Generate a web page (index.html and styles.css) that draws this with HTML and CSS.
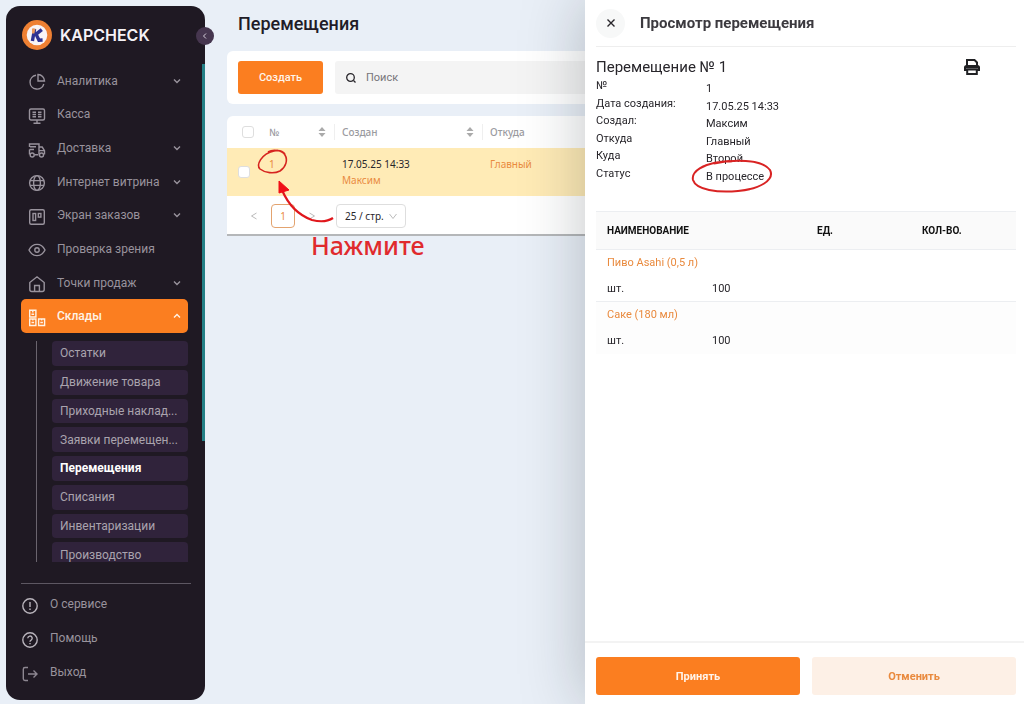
FILE: index.html
```
<!DOCTYPE html>
<html lang="ru">
<head>
  <meta charset="UTF-8" />
  <meta name="viewport" content="width=device-width, initial-scale=1" />
  <title>Перемещения - KAPCHECK</title>
  <link rel="stylesheet" href="styles.css">
</head>
<body>

  <!-- Sidebar -->
  <aside class="sidebar">
    <a class="logo" href="#">
      <svg width="30" height="30" viewBox="0 0 30 30">
        <circle cx="15" cy="15" r="15" fill="#ee8033" />
        <circle cx="15" cy="15" r="10.3" fill="#f8f4f6" />
        <path d="M12.6 9 10.4 21M19.8 9.6 12.8 15.2M14.2 14.6 17 20.2 20.6 20" fill="none" stroke="#2e3192" stroke-width="3.4" />
        <path d="M10 8.4h3.4l-1 5H10z" fill="#ee9b5b" />
      </svg>
      <span>KAPCHECK</span>
    </a>
    <button class="collapse" type="button" aria-label="Свернуть меню">
      <svg width="8" height="8" viewBox="0 0 8 8"><path d="M5 1.5 2.5 4 5 6.5" /></svg>
    </button>

    <nav class="scroller">
      <ul class="menu">
        <li><a href="#">
          <svg class="icon" viewBox="0 0 18 18"><path d="M8 2.2A7 7 0 1 0 15.8 11M10 1.5v6.5h6.5A6.6 6.6 0 0 0 10 1.5z" /></svg>
          <span>Аналитика</span>
          <svg class="arrow" viewBox="0 0 8 8"><path d="M1 2.5 4 5.5 7 2.5" /></svg>
        </a></li>
        <li><a href="#">
          <svg class="icon" viewBox="0 0 18 18"><rect x="1.5" y="2" width="15" height="11" rx="1.5" /><path d="M9 13v3M5.5 16.3h7M4.5 5.3H8M4.5 7.5H8M4.5 9.7H8M10 5.3h3.5M10 7.5h3.5M10 9.7h3.5" /></svg>
          <span>Касса</span>
        </a></li>
        <li><a href="#">
          <svg class="icon" viewBox="0 0 18 18"><path d="M1.5 6V3h9.5v10M2 5.8h6M1.5 8.5h4.5M1.5 8.5V13.5M6.5 13.8h4M11 6h3.2l2.3 3.6v4M11 9.6h5.5" /><circle cx="4.2" cy="14" r="2" /><circle cx="13.5" cy="14" r="2" /></svg>
          <span>Доставка</span>
          <svg class="arrow" viewBox="0 0 8 8"><path d="M1 2.5 4 5.5 7 2.5" /></svg>
        </a></li>
        <li><a href="#">
          <svg class="icon" viewBox="0 0 18 18"><circle cx="9" cy="9" r="7.4" /><ellipse cx="9" cy="9" rx="3.4" ry="7.4" /><path d="M2 6.6h14M2 11.4h14" /></svg>
          <span>Интернет витрина</span>
          <svg class="arrow" viewBox="0 0 8 8"><path d="M1 2.5 4 5.5 7 2.5" /></svg>
        </a></li>
        <li><a href="#">
          <svg class="icon" viewBox="0 0 18 18"><rect x="1.7" y="1.7" width="14.6" height="14.6" rx="1.5" /><rect x="5" y="5.5" width="2.6" height="7" /><rect x="10.3" y="5.5" width="2.6" height="3.6" /></svg>
          <span>Экран заказов</span>
          <svg class="arrow" viewBox="0 0 8 8"><path d="M1 2.5 4 5.5 7 2.5" /></svg>
        </a></li>
        <li><a href="#">
          <svg class="icon" viewBox="0 0 18 18"><path d="M1 9c1.8-3.6 4.6-5.6 8-5.6s6.2 2 8 5.6c-1.8 3.6-4.6 5.6-8 5.6S2.8 12.6 1 9z" /><circle cx="9" cy="9" r="2.2" /></svg>
          <span>Проверка зрения</span>
        </a></li>
        <li><a href="#">
          <svg class="icon" viewBox="0 0 18 18"><path d="M1.8 7.5 9 1.8l7.2 5.7v7a2 2 0 0 1-2 2H3.8a2 2 0 0 1-2-2zM6.6 16.5v-6h4.8v6" /></svg>
          <span>Точки продаж</span>
          <svg class="arrow" viewBox="0 0 8 8"><path d="M1 2.5 4 5.5 7 2.5" /></svg>
        </a></li>
        <li><a class="active" href="#">
          <svg class="icon" viewBox="0 0 18 18"><path d="M1.7 1.2h6.2v6.8h-6.200zM1.700 10h6.200v6.500h-6.200zM10.600 10h6v6.500h-6zM3.500 5.300h2.600M3.500 13.500h2.600M12.300 13.500h2.600M4.800 1.500v2M4.800 10v1.500M13.600 10v1.500" /></svg>
          <span>Склады</span>
          <svg class="arrow" viewBox="0 0 8 8"><path d="M1 5.5 4 2.5 7 5.5" /></svg>
        </a></li>
      </ul>

      <ul class="submenu">
        <li><a href="#">Остатки</a></li>
        <li><a href="#">Движение товара</a></li>
        <li><a href="#">Приходные наклад...</a></li>
        <li><a href="#">Заявки перемещен...</a></li>
        <li><a class="current" href="#">Перемещения</a></li>
        <li><a href="#">Списания</a></li>
        <li><a href="#">Инвентаризации</a></li>
        <li><a href="#">Производство</a></li>
      </ul>
    </nav>
    <span class="scroll-thumb"></span>

    <ul class="bottom-menu">
      <li><a href="#">
        <svg class="icon" viewBox="0 0 18 18"><circle cx="9" cy="9" r="7.2" /><path d="M9 5v5M9 11.6v1.4" /></svg>
        <span>О сервисе</span>
      </a></li>
      <li><a href="#">
        <svg class="icon" viewBox="0 0 18 18"><circle cx="9" cy="9" r="7.2" /><path d="M6.800 7.300a2.200 2.200 0 1 1 3.300 1.900c-.8.400-1.100.8-1.100 1.500M9 12v1.300" /></svg>
        <span>Помощь</span>
      </a></li>
      <li><a href="#">
        <svg class="icon exit" viewBox="0 0 18 18"><path d="M7 2.500H4A1.700 1.700 0 0 0 2.300 4.200v9.600A1.700 1.700 0 0 0 4 15.500h3M7 9h9M12.500 5.500 16 9l-3.500 3.500" /></svg>
        <span>Выход</span>
      </a></li>
    </ul>
  </aside>

  <!-- Page content -->
  <main class="content">
    <h1>Перемещения</h1>

    <div class="toolbar">
      <button class="btn btn-primary" type="button">Создать</button>
      <label class="search">
        <svg width="12" height="12" viewBox="0 0 12 12"><circle cx="5.500" cy="5.500" r="3.800" /><path d="M8.500 8.500 10.500 10.500" /></svg>
        <input type="text" placeholder="Поиск" aria-label="Поиск" />
      </label>
    </div>

    <div class="card">
      <table class="list">
        <colgroup>
          <col class="col-check"><col class="col-number"><col class="col-created"><col>
        </colgroup>
        <thead>
          <tr>
            <th><input type="checkbox" aria-label="Выбрать все" /></th>
            <th><div class="sortable">№ <svg width="8" height="10" viewBox="0 0 8 10"><path d="M4 0 7.500 4h-7zM4 10 .5 6h7z" /></svg></div></th>
            <th class="divided"><div class="sortable">Создан <svg width="8" height="10" viewBox="0 0 8 10"><path d="M4 0 7.500 4h-7zM4 10 .5 6h7z" /></svg></div></th>
            <th class="divided">Откуда</th>
          </tr>
        </thead>
        <tbody>
          <tr>
            <td><input type="checkbox" aria-label="Выбрать перемещение 1" /></td>
            <td><a href="#">1</a></td>
            <td>17.05.25 14:33<br><a href="#">Максим</a></td>
            <td><a href="#">Главный</a></td>
          </tr>
        </tbody>
      </table>

      <div class="pagination">
        <button type="button" aria-label="Назад"><svg width="8" height="8" viewBox="0 0 8 8"><path d="M6.500 1 1.500 4l5 3" /></svg></button>
        <button class="page" type="button">1</button>
        <button type="button" aria-label="Вперёд"><svg width="8" height="8" viewBox="0 0 8 8"><path d="M1.500 1l5 3-5 3" /></svg></button>
        <div class="page-size">
          <select aria-label="Строк на странице">
            <option>25 / стр.</option>
            <option>50 / стр.</option>
          </select>
          <svg width="8" height="8" viewBox="0 0 8 8"><path d="M.5 2 4 6.500 7.500 2" /></svg>
        </div>
      </div>

      <!-- Hint over the row -->
      <div class="hint">
        <svg width="90" height="80" viewBox="0 0 90 80">
          <path d="M11 4C16 1 25 2 28 7c3 5 1 12-5 16-6 3-15 2-20-2C-1 17 4 6 17 3c4-1 8-1 11 3" stroke="#d6231f" stroke-width="1.600" />
          <path d="M25 42c6 14 16 25 30 30 8 2 15 2 21-2" stroke="#e0171c" stroke-width="2.200" />
          <path d="M22 33 32 42 22 45z" fill="#f00f17" stroke="#f00f17" />
        </svg>
        <strong>Нажмите</strong>
      </div>
    </div>
  </main>

  <!-- Drawer -->
  <section class="drawer">
    <header class="drawer-header">
      <button class="close" type="button" aria-label="Закрыть">
        <svg width="10" height="10" viewBox="0 0 10 10"><path d="M1.500 1.500l7 7M8.500 1.500l-7 7" /></svg>
      </button>
      <h2>Просмотр перемещения</h2>
    </header>

    <div class="drawer-body">
      <div class="doc-title">
        <h3>Перемещение № 1</h3>
        <button class="print" type="button" aria-label="Печать">
          <svg width="16" height="16" viewBox="0 0 16 16">
            <path d="M3 7V1h7.500L13 3.500V7M3.200 11H1V8.200A1.200 1.200 0 0 1 2.200 7h11.600A1.200 1.200 0 0 1 15 8.200V11h-2.200M3.200 10.500h9.600V15H3.200z" />
            <path d="M1 7h14v2.500H1z" fill="#202124" stroke="none" />
          </svg>
        </button>
      </div>

      <dl class="info">
        <dt>№</dt><dd>1</dd>
        <dt>Дата создания:</dt><dd>17.05.25 14:33</dd>
        <dt>Создал:</dt><dd>Максим</dd>
        <dt>Откуда</dt><dd>Главный</dd>
        <dt>Куда</dt><dd>Второй</dd>
        <dt>Статус</dt>
        <dd class="status">В процессе
          <svg width="84" height="36" viewBox="0 0 84 36"><path d="M24 4.500C42 0 72 0 80 11c5 10-10 19-32 21-20 2-42-1-45-11C1 12 14 5 30 3c5-1 9-1 12-.500" /></svg>
        </dd>
      </dl>

      <table class="items">
        <thead>
          <tr><th colspan="2">НАИМЕНОВАНИЕ</th><th>ЕД.</th><th>КОЛ-ВО.</th></tr>
        </thead>
        <tbody>
          <tr><td colspan="4"><a href="#">Пиво Asahi (0,5 л)</a></td></tr>
          <tr><td>шт.</td><td>100</td><td></td><td></td></tr>
        </tbody>
        <tbody>
          <tr><td colspan="4"><a href="#">Саке (180 мл)</a></td></tr>
          <tr><td>шт.</td><td>100</td><td></td><td></td></tr>
        </tbody>
      </table>
    </div>

    <footer class="drawer-footer">
      <button class="btn btn-primary" type="button">Принять</button>
      <button class="btn btn-light" type="button">Отменить</button>
    </footer>
  </section>

</body>
</html>
```
FILE: styles.css
```
* {
  box-sizing: border-box;
}
body {
  display: flex;
  gap: 22px;
  height: 100vh;
  margin: 0;
  padding: 6px 0 4px 6px;
  overflow: hidden;
  background: #e9eff7;
  color: #28262b;
  font-family: Roboto, sans-serif;
  font-size: 11px;
}
h1, h2, h3, ul, dl, dd {
  margin: 0;
  padding: 0;
}
ul {
  list-style: none;
}
a {
  color: #e98a3e;
  text-decoration: none;
}
button, input, select {
  font: inherit;
  color: inherit;
}
button {
  padding: 0;
  border: none;
  background: none;
  cursor: pointer;
}
svg {
  flex: none;
  fill: none;
  stroke: currentColor;
}

/* Sidebar */
.sidebar {
  display: flex;
  flex-direction: column;
  flex: none;
  position: relative;
  width: 199px;
  padding: 0 14px 0 15px;
  border-radius: 14px;
  background: #1f1923;
  font-size: 12px;
}
.sidebar a {
  color: #99939d;
}
.sidebar .logo {
  display: flex;
  align-items: center;
  gap: 8px;
  height: 58px;
  flex: none;
  padding-left: 1px;
  color: #f5f2f6;
  font-family: Inter, sans-serif;
  font-size: 16px;
  font-weight: 600;
}
.logo svg {
  stroke: none;
}
.collapse {
  display: flex;
  align-items: center;
  justify-content: center;
  position: absolute;
  top: 21px;
  right: -9px;
  width: 18px;
  height: 18px;
  border-radius: 50%;
  background: #46364f;
  color: #d5ced9;
}
.scroller {
  flex: 1;
  min-height: 0;
  margin-right: 3px;
  overflow: hidden;
}
.scroll-thumb {
  position: absolute;
  top: 58px;
  right: 0;
  width: 3px;
  height: 377px;
  background: #248086;
}
.menu {
  display: grid;
  grid-template-columns: minmax(0, 1fr);
  grid-auto-rows: 1fr;
  height: 269px;
}
.menu a {
  display: flex;
  align-items: center;
  gap: 11px;
  height: 100%;
  padding: 0 7px;
  border-radius: 5px;
}
.menu span {
  flex: 1;
  min-width: 0;
  white-space: nowrap;
}
.menu .active {
  background: #fb7e20;
  color: #fff3e6;
  font-weight: 500;
}
.icon {
  width: 18px;
  height: 18px;
  margin-top: 3px;
  stroke-width: 1.4;
}
.arrow {
  width: 8px;
  height: 8px;
  stroke-width: 1.4;
}
.submenu {
  display: grid;
  grid-template-columns: minmax(0, 1fr);
  grid-auto-rows: 1fr;
  gap: 4px;
  height: 226px;
  margin: 8px 0 0 15px;
  padding-left: 15px;
  border-left: 1px solid #6a646e;
}
.submenu a {
  display: flex;
  align-items: center;
  height: 100%;
  padding: 0 8px;
  border-radius: 4px;
  background: #30233b;
  color: #aaa3ae;
  white-space: nowrap;
}
.submenu .current {
  color: #fff;
  font-weight: 700;
}
.bottom-menu {
  flex: none;
  margin-top: 21px;
  padding: 3px 0 11px;
  border-top: 1px solid #5d5762;
}
.bottom-menu a {
  display: flex;
  align-items: center;
  gap: 11px;
  height: 34px;
}
.bottom-menu .icon {
  color: #b9b4bc;
}
.bottom-menu .exit {
  color: #8d8791;
}

/* Page content */
.content {
  flex: 1;
  min-width: 0;
}
h1 {
  padding: 7px 0 16px 11px;
  color: #211c27;
  font-size: 18px;
  line-height: 22px;
  font-weight: 500;
}
.btn {
  border-radius: 3px;
  font-size: 11px;
  font-weight: 700;
}
.btn-primary {
  background: #fb7e20;
  color: #fff4ea;
}
.btn-light {
  background: #fdf0e6;
  color: #e98a3e;
}
.toolbar {
  display: flex;
  gap: 12px;
  padding: 10px 11px;
  border-radius: 6px;
  background: #fff;
}
.toolbar .btn {
  width: 85px;
  height: 33px;
  font-weight: 500;
}
.search {
  display: flex;
  flex: 1;
  align-items: center;
  gap: 9px;
  padding: 0 10px;
  border-radius: 3px;
  background: #f4f4f4;
}
.search svg {
  stroke-width: 1.3;
}
.search input {
  flex: 1;
  min-width: 0;
  padding: 0;
  border: none;
  outline: none;
  background: none;
}
.search input::placeholder {
  color: #77757a;
}
.card {
  position: relative;
  margin-top: 12px;
  border-bottom: 2px solid #b5b7b9;
  border-radius: 6px 6px 0 0;
  background: #fff;
  font-family: "Noto Sans", sans-serif;
  font-size: 10px;
}
.list {
  width: 100%;
  border-collapse: collapse;
  table-layout: fixed;
}
.col-check {
  width: 34px;
}
.col-number {
  width: 73px;
}
.col-created {
  width: 148px;
}
.list th {
  height: 32px;
  padding: 0 8px;
  color: #9b9b9f;
  font-weight: 500;
  text-align: left;
}
.list th:first-child {
  padding: 0 0 0 15px;
}
.sortable {
  display: flex;
  align-items: center;
  justify-content: space-between;
}
.sortable svg {
  fill: #aaa;
  stroke: none;
}
.divided {
  background: linear-gradient(#efefef, #efefef) left center / 1px 16px no-repeat;
}
.list td {
  height: 48px;
  padding: 8px 8px 0;
  background: #ffebb6;
  line-height: 16px;
  vertical-align: top;
}
.list td:first-child {
  padding: 0 0 0 11px;
  vertical-align: middle;
}
.list input {
  appearance: none;
  display: block;
  width: 12px;
  height: 12px;
  margin: 0;
  border: 1px solid #dedede;
  border-radius: 3px;
  background: #fff;
}
.pagination {
  display: flex;
  align-items: center;
  gap: 13px;
  height: 38px;
  padding: 2px 23px 0;
}
.pagination button {
  color: #bbb;
}
.pagination .page {
  width: 24px;
  height: 24px;
  border: 1px solid #e3a36f;
  border-radius: 4px;
  color: #e98a3e;
}
.page-size {
  display: grid;
  align-items: center;
  margin-left: 7px;
}
.page-size select, .page-size svg {
  grid-area: 1 / 1;
}
.page-size select {
  appearance: none;
  width: 70px;
  height: 24px;
  padding: 0 8px;
  border: 1px solid #dedede;
  border-radius: 4px;
  background: #fff;
}
.page-size svg {
  justify-self: end;
  margin-right: 9px;
  color: #bbb;
}
.hint {
  position: absolute;
  top: 32px;
  left: 30px;
  pointer-events: none;
}
.hint svg {
  display: block;
  overflow: visible;
}
.hint strong {
  display: block;
  margin-left: 54px;
  color: #e02a2d;
  font-size: 25px;
  font-weight: 500;
  line-height: 34px;
}

/* Drawer */
.drawer {
  display: flex;
  flex-direction: column;
  position: fixed;
  top: 0;
  right: 0;
  bottom: 0;
  width: min(439px, 100%);
  background: #fff;
  box-shadow: 0 0 60px rgba(20, 30, 40, 0.26);
}
.drawer-header {
  display: flex;
  align-items: center;
  gap: 15px;
  height: 47px;
  margin: 0 8px 0 11px;
  border-bottom: 1px solid #eee;
}
.close {
  display: flex;
  align-items: center;
  justify-content: center;
  width: 29px;
  height: 29px;
  border-radius: 50%;
  background: #f7f8f8;
}
.close svg {
  stroke-width: 1.4;
}
h2 {
  color: #3c3a3f;
  font-size: 15px;
  font-weight: 700;
}
.drawer-body {
  flex: 1;
  padding: 10px 8px 0 11px;
}
.doc-title {
  display: flex;
  align-items: center;
  justify-content: space-between;
  height: 20px;
  padding-right: 36px;
}
h3 {
  font-size: 15px;
  font-weight: 400;
}
.print {
  display: flex;
  color: #202124;
}
.print svg {
  stroke-width: 2;
}
.info {
  display: grid;
  grid-template-columns: 110px 1fr;
  grid-auto-rows: 1fr;
  height: 105px;
  line-height: 17px;
}
.info dt, .info dd {
  height: 17px;
}
.info dd {
  padding-top: 3px;
}
.status {
  position: relative;
}
.status svg {
  position: absolute;
  top: -6px;
  left: -16px;
  color: #d92323;
  stroke-width: 2;
}
.items {
  width: 100%;
  margin-top: 29px;
  border-collapse: collapse;
  table-layout: fixed;
}
.items th {
  height: 38px;
  padding: 0 11px;
  border-top: 1px solid #eceef1;
  border-bottom: 1px solid #eceef1;
  background: #fafafa;
  color: #111;
  font-size: 10px;
  font-weight: 700;
  text-align: left;
}
.items td {
  height: 26px;
  padding: 0 11px;
}
.items tbody + tbody {
  border-top: 1px solid #eceef1;
  background: #fdfdfd;
}
.drawer-footer {
  display: flex;
  gap: 12px;
  padding: 14px 8px 9px 11px;
  border-top: 2px solid #f3f3f3;
}
.drawer-footer .btn {
  flex: 1;
  height: 38px;
}
```
